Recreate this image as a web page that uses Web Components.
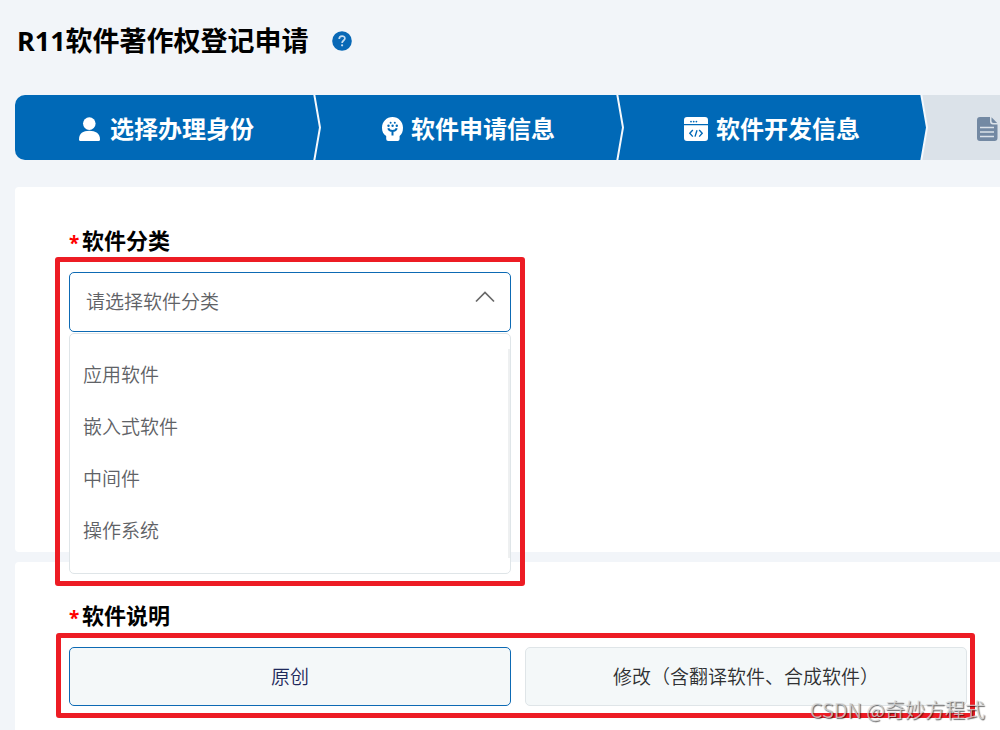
<!DOCTYPE html>
<html lang="zh-CN">
<head>
<meta charset="utf-8">
<title>R11软件著作权登记申请</title>
<style>
  html, body { margin: 0; min-height: 100%; }
  body {
    background: #f2f5f9;
    font-family: "Noto Sans", "Noto Sans CJK SC", sans-serif;
    color: #000;
  }
</style>
</head>
<body>
<registration-page></registration-page>

<template id="t-page">
  <style>
    :host { display: block; position: relative; overflow: hidden; min-height: 100vh; height: 100vh; padding-left: 15px; box-sizing: border-box; }
    main { display: flex; flex-direction: column; gap: 10px; margin-top: 27px; }
    .columns { display: grid; grid-template-columns: 1fr 1fr; gap: 14px; }
    form-card:first-child { --space-below: 220px; }
    water-mark { position: absolute; right: 15px; bottom: 6px; }
  </style>
  <page-header>R11软件著作权登记申请</page-header>
  <step-bar></step-bar>
  <main>
    <form-card label="软件分类">
      <div class="columns"><mark-frame><category-select></category-select></mark-frame></div>
    </form-card>
    <form-card label="软件说明">
      <mark-frame class="wide"><choice-group></choice-group></mark-frame>
    </form-card>
  </main>
  <water-mark>CSDN @奇妙方程式</water-mark>
</template>

<template id="t-header">
  <style>
    :host { display: flex; align-items: center; gap: 23px; height: 81px; padding: 0 0 14px 2px; box-sizing: content-box; }
    h1 { margin: 0; font-size: 27px; line-height: 38px; font-weight: 700; }
    button { width: 20px; height: 20px; padding: 0; border: 0; background: none; }
    svg { display: block; }
  </style>
  <h1><slot></slot></h1>
  <button type="button" aria-label="帮助">
    <svg width="20" height="20" viewBox="0 0 20 20"><circle cx="10" cy="10" r="9.8" fill="#0868b6"/><path d="M7.2 8c0-3.8 5.7-3.8 5.7-.5 0 2-2.8 2.1-2.8 4.4" fill="none" stroke="#c5dcf0" stroke-width="1.7"/><circle cx="10.1" cy="14.3" r="1.1" fill="#c5dcf0"/></svg>
  </button>
</template>

<template id="t-steps">
  <style>
    :host { display: block; overflow: hidden; border-radius: 10px 0 0 10px; }
    ol { display: flex; margin: 0; padding: 0; list-style: none; }
    li { flex: 0 0 303px; display: flex; height: 65px; background: #0069b7; color: #fff; }
    li:first-child { flex-basis: 306px; }
    li:nth-child(3) { flex-basis: 304px; }
    li:last-child { flex: 1 0 72px; background: #dbe2e9; }
    .body { flex: 1; display: flex; align-items: center; justify-content: center; gap: 8px; padding-top: 2px; font-size: 24px; line-height: 36px; font-weight: 700; white-space: nowrap; }
    li:first-child .body { padding-left: 5px; gap: 10px; }
    li:last-child .body { justify-content: flex-start; padding-left: 49px; }
    .edge { flex: none; display: block; }
    .icon { flex: none; display: block; }
  </style>
  <ol>
    <li><div class="body">
      <svg class="icon" width="21" height="24" viewBox="0 0 21 24" fill="#fff"><circle cx="10.3" cy="6.6" r="6.3"/><path d="M0 22.5c0-6 4-8.7 10.3-8.7S21 16.5 21 22.5q0 1.5-1.5 1.5h-18Q0 24 0 22.5z"/></svg>
      <span>选择办理身份</span></div>
      <svg class="edge" width="8" height="65" viewBox="0 0 8 65"><path d="M1 -2L7 32.5L1 67" fill="none" stroke="#f4f8fc" stroke-width="2"/></svg></li>
    <li><div class="body">
      <svg class="icon" width="21" height="24" viewBox="0 0 21 24"><path d="M10.5 0C16.5 0 21 4.8 21 10.8c0 4-1.200 6.600-3.400 8.300V22q0 2-2 2H6.200q-2 0-2-2v-2.900C1.400 17.400 0 14.800 0 10.800 0 4.800 4.500 0 10.500 0z" fill="#fff"/><path d="M6.300 11.200q.7 2.700 4.200 2.700t4.200-2.700M10.500 13.600V18.400" fill="none" stroke="#0069b7" stroke-width="2"/><g fill="#0069b7"><circle cx="6.500" cy="8.800" r="1.200"/><circle cx="10.600" cy="8.800" r="1.200"/><circle cx="14.800" cy="8.800" r="1.200"/><circle cx="8.600" cy="5.700" r="1"/><circle cx="12.800" cy="5.700" r="1"/></g></svg>
      <span>软件申请信息</span></div>
      <svg class="edge" width="8" height="65" viewBox="0 0 8 65"><path d="M1 -2L7 32.5L1 67" fill="none" stroke="#f4f8fc" stroke-width="2"/></svg></li>
    <li><div class="body">
      <svg class="icon" width="24" height="24" viewBox="0 0 24 24"><path d="M3 0h18q3 0 3 3v4H0V3q0-3 3-3zM0 8.200h24V21q0 3-3 3H3q-3 0-3-3z" fill="#fff"/><g fill="#0069b7"><circle cx="7" cy="4.600" r=".9"/><circle cx="9.700" cy="4.600" r=".9"/><circle cx="12.400" cy="4.600" r=".9"/></g><path d="M8.800 13l-3 3.300 3 3.300M15.200 13l3 3.300-3 3.300M13 13.200l-2 6.400" fill="none" stroke="#0069b7" stroke-width="1.400"/></svg>
      <span>软件开发信息</span></div>
      <svg class="edge" width="8" height="65" viewBox="0 0 8 65"><path d="M1 -2L7 32.5L1 67H9V-2z" fill="#dbe2e9"/><path d="M1 -2L7 32.5L1 67" fill="none" stroke="#f4f8fc" stroke-width="2"/></svg></li>
    <li><div class="body">
      <svg class="icon" width="21" height="24" viewBox="0 0 21 24"><path d="M3 0h10v4.500q0 3 3 3h4.500V21q0 3-3 3H3q-3 0-3-3V3q0-3 3-3z" fill="#7389a3"/><path d="M14.500.3L20.200 6H16.500q-2 0-2-2z" fill="#7389a3"/><path d="M3 10.500h14M3 15h14M3 19.500h14" stroke="#dbe2e9" stroke-width="1.400"/></svg>
    </div></li>
  </ol>
</template>

<template id="t-card">
  <style>
    :host { display: block; background: #fff; border-radius: 4px 0 0 4px; padding: 36px 33px var(--space-below, 40px) 54px; }
    h2 { display: flex; align-items: center; gap: 3px; margin: 0 0 15px; font-size: 22px; line-height: 34px; font-weight: 700; }
    .star { width: 10px; font: 700 19px/24px "Noto Sans", sans-serif; color: #f00; padding-top: 6px; text-align: right; }
  </style>
  <h2><span class="star">*</span><span class="text"></span></h2>
  <slot></slot>
</template>

<template id="t-frame">
  <style>
    :host { display: block; position: relative; }
    .ring { position: absolute; z-index: 3; inset: -15px -14px -254px -14px; border: 5px solid #ed1c24; border-radius: 3px; pointer-events: none; }
    :host(.wide) .ring { inset: -14px -8px -12px -13px; }
  </style>
  <slot></slot>
  <div class="ring"></div>
</template>

<template id="t-select">
  <style>
    :host { display: block; position: relative; font-size: 19px; font-weight: 350; color: #606266; }
    label { display: block; position: relative; }
    select { appearance: none; display: block; box-sizing: border-box; width: 100%; height: 60px; margin: 0; padding: 0 48px 0 16px; border: 1px solid #0d6ab4; border-radius: 5px; background: #fff; font: inherit; color: inherit; }
    svg { position: absolute; right: 16px; top: 18px; pointer-events: none; }
    .menu { position: absolute; z-index: 2; top: 61px; left: 0; right: 0; display: flex; box-sizing: border-box; height: 241px; padding: 15px 0; border: 1px solid #dfe5e8; border-radius: 5px; background: #fff; }
    ul { flex: 1; margin: 0; padding: 0; list-style: none; }
    li { padding: 0 13px; line-height: 52px; }
    .bar { width: 2px; background: #eef0f1; }
  </style>
  <label><select aria-label="软件分类"><option>请选择软件分类</option></select>
    <svg width="20" height="14" viewBox="0 0 20 14"><path d="M1 11.5L10 2.5L19 11.5" fill="none" stroke="#686868" stroke-width="1.7"/></svg></label>
  <div class="menu">
    <ul role="listbox"><li role="option">应用软件</li><li role="option">嵌入式软件</li><li role="option">中间件</li><li role="option">操作系统</li></ul>
    <div class="bar"></div>
  </div>
</template>

<template id="t-choice">
  <style>
    :host { display: grid; grid-template-columns: 1fr 1fr; gap: 14px; }
    button { box-sizing: border-box; height: 59px; padding: 0 0 1px; border: 1px solid #dfe5e8; border-radius: 5px; background: #f4f8f9; font: 350 19px/28px "Noto Sans CJK SC", sans-serif; color: #303133; }
    button[aria-pressed="true"] { border-color: #0d6ab4; color: #1f2a5c; }
  </style>
  <button type="button" aria-pressed="true">原创</button>
  <button type="button" aria-pressed="false">修改（含翻译软件、合成软件）</button>
</template>

<template id="t-watermark">
  <style>
    :host { display: block; z-index: 4; font: 350 20px/28px "Liberation Sans", "Noto Sans CJK SC", sans-serif; font-family: "Noto Sans CJK SC", sans-serif; white-space: nowrap; color: rgba(215, 215, 215, .8); text-shadow: 1px 1px 1px rgba(0, 0, 0, .6); pointer-events: none; }
  </style>
  <slot></slot>
</template>

<script>
  class TemplateElement extends HTMLElement {
    constructor() {
      super();
      const source = document.getElementById(this.constructor.template);
      this.attachShadow({ mode: "open" }).append(source.content.cloneNode(true));
    }
  }
  const define = (name, template) =>
    customElements.define(name, class extends TemplateElement { static template = template; });

  customElements.define("form-card", class extends TemplateElement {
    static template = "t-card";
    connectedCallback() {
      this.shadowRoot.querySelector(".text").textContent = this.getAttribute("label");
    }
  });
  define("page-header", "t-header");
  define("step-bar", "t-steps");
  define("mark-frame", "t-frame");
  define("category-select", "t-select");
  define("choice-group", "t-choice");
  define("water-mark", "t-watermark");
  define("registration-page", "t-page");
</script>
</body>
</html>
